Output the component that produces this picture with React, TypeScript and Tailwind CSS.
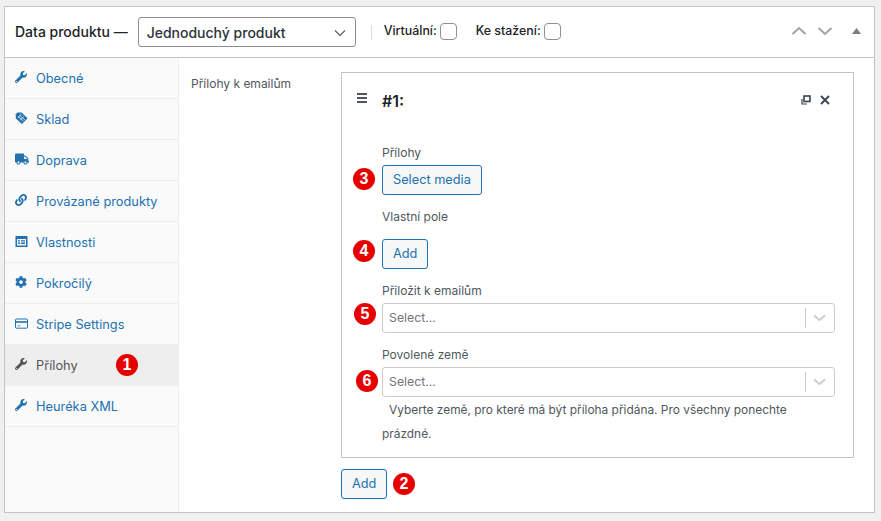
import React from "react";
import { FaWrench, FaTruck, FaLink, FaCog } from "react-icons/fa";

const Tag = () => (
  <svg width="13" height="13" viewBox="0 0 13 13" fill="currentColor">
    <path d="M6.5 0.5 12.6 6.2 7 12 0.8 6.6 0.8 2.2 2.4 0.5Z" />
    <g stroke="#fafafa" strokeWidth="0.7">
      <path d="M4.6 3 9.9 8" />
      <path d="M3.4 4.6 8.6 9.4" />
      <path d="M6.2 2.2 3 6" />
      <path d="M8.6 4.4 5.4 8.2" />
    </g>
  </svg>
);
const Table = () => (
  <svg width="13" height="13" viewBox="0 0 13 13" fill="currentColor">
    <path fillRule="evenodd" d="M0.5 1h12v11h-12zM2 4v6.5h9V4zM3 5.2h2v1.3H3zM6 5.2h4v1.3H6zM3 7.6h2v1.3H3zM6 7.6h4v1.3H6z" />
  </svg>
);
const Card = () => (
  <svg width="13" height="13" viewBox="0 0 13 13" fill="none" stroke="currentColor">
    <rect x="0.5" y="2" width="12" height="9.2" rx="1" />
    <path d="M0.5 5h12" strokeWidth="1.6" />
    <path d="M2.5 8.8h3" strokeWidth="0.7" />
  </svg>
);

const tabs: { label: string; icon: React.ReactNode; active?: boolean; badge?: string }[] = [
  { label: "Obecné", icon: <FaWrench size={12} /> },
  { label: "Sklad", icon: <Tag /> },
  { label: "Doprava", icon: <FaTruck size={14} /> },
  { label: "Provázané produkty", icon: <FaLink size={12} /> },
  { label: "Vlastnosti", icon: <Table /> },
  { label: "Pokročilý", icon: <FaCog size={12} /> },
  { label: "Stripe Settings", icon: <Card /> },
  { label: "Přílohy", icon: <FaWrench size={12} />, active: true, badge: "1" },
  { label: "Heuréka XML", icon: <FaWrench size={12} /> },
];

const Badge = ({ n, className }: { n: string; className: string }) => (
  <span
    className={`absolute flex h-[22px] w-[22px] items-center justify-center rounded-full bg-[#e60000] text-[16px] leading-none font-bold text-white ${className}`}
    style={{ fontFamily: "'Liberation Sans', sans-serif" }}
  >
    {n}
  </span>
);

const Btn = ({ children }: { children: React.ReactNode }) => (
  <button className="h-[30px] rounded-[3px] border border-[#2271b1] bg-[#f6f7f7] px-[10px] text-[12.75px] text-[#2271b1]">
    {children}
  </button>
);

const Select = () => (
  <div className="flex h-[30px] w-full items-center rounded-[3px] border border-[#cccccc] bg-white">
    <span className="flex-1 pl-[6px] text-[12.3px] text-[#757575]">Select...</span>
    <span className="h-[20px] w-px bg-[#cccccc]" />
    <svg width="28" height="10" viewBox="0 0 28 10" fill="none" stroke="#cccccc" strokeWidth="2">
      <path d="M8 2.5 13.5 7 19 2.5" />
    </svg>
  </div>
);

export default function App() {
  return (
    <div
      className="h-[521px] w-[881px] overflow-hidden bg-[#f0f0f1] pt-[6px] pl-[4px] text-[#50575e]"
      style={{ fontFamily: "Inter, 'Noto Sans', sans-serif" }}
    >
      <div className="flex h-[507px] w-[871px] flex-col border border-[#c3c4c7] bg-white text-[12px]">
        <div className="flex h-[51px] shrink-0 items-center border-b border-[#c3c4c7] pr-[13px] pl-[10px] text-[#1d2327]">
          <span className="-translate-y-px text-[14px] font-medium">Data produktu —</span>
          <div className="relative ml-[10px] flex h-[30px] w-[218px] items-center rounded-[3px] border border-[#8c8f94] pl-[8px] text-[14px] font-medium text-[#2c3338]">
            Jednoduchý produkt
            <svg className="absolute top-[11px] right-[9px]" width="12" height="8" viewBox="0 0 12 8" fill="none" stroke="#50575e" strokeWidth="1.1">
              <path d="M1 1.5 6 6.5 11 1.5" />
            </svg>
          </div>
          <span className="mr-[12px] ml-[15px] h-[15px] w-px bg-[#dcdcde]" />
          <span className="-translate-y-px text-[12.4px] font-medium">Virtuální:</span>
          <span className="ml-[3px] h-[17px] w-[17px] -translate-y-px rounded-[4px] border border-[#8c8f94]" />
          <span className="ml-[19px] -translate-y-px text-[12.4px] font-medium">Ke stažení:</span>
          <span className="ml-[3px] h-[17px] w-[17px] -translate-y-px rounded-[4px] border border-[#8c8f94]" />
          <svg className="ml-auto -translate-y-px" width="16" height="10" viewBox="0 0 16 10" fill="none" stroke="#a0a3a6" strokeWidth="2">
            <path d="M1.5 8 8 2 14.5 8" />
          </svg>
          <svg className="ml-[10px] -translate-y-px" width="16" height="10" viewBox="0 0 16 10" fill="none" stroke="#a0a3a6" strokeWidth="2">
            <path d="M1.5 2 8 8 14.5 2" />
          </svg>
          <svg className="ml-[19px] -translate-y-px" width="9" height="6" viewBox="0 0 9 6" fill="#787c82">
            <path d="M4.5 0 9 6H0Z" />
          </svg>
        </div>
        <div className="flex min-h-0 flex-1">
          <div className="w-[174px] shrink-0 border-r border-[#eeeeee] bg-[#fafafa]">
            {tabs.map((t) => (
              <div
                key={t.label}
                className={`relative flex h-[41px] items-center border-b border-[#eeeeee] pl-[10px] text-[12.8px] ${t.active ? "bg-[#eeeeee] text-[#555555]" : "text-[#2271b1]"}`}
              >
                <span className="flex w-[21px] shrink-0 -translate-y-px justify-start">{t.icon}</span>
                <span className="pt-[2px]">{t.label}</span>
                {t.badge && <Badge n={t.badge} className="top-[9px] left-[111px]" />}
              </div>
            ))}
          </div>
          <div className="flex flex-1 items-start pt-[14px] pl-[12px]">
            <div className="w-[150px] shrink-0 pt-[3px]">Přílohy k emailům</div>
            <div className="flex flex-col items-start">
              <div className="relative h-[386px] w-[513px] border border-[#c3c4c7] pl-[40px]">
                <div className="absolute top-[20px] left-[15px] flex flex-col gap-[2px]">
                  <span className="h-[2px] w-[10px] bg-[#50575e]" />
                  <span className="h-[2px] w-[10px] bg-[#50575e]" />
                  <span className="h-[2px] w-[10px] bg-[#50575e]" />
                </div>
                <svg className="absolute top-[22px] right-[42px]" width="10" height="10" viewBox="0 0 10 10" fill="none" stroke="#3c434a" strokeWidth="1.2">
                  <rect x="3" y="1" width="6" height="5.5" strokeWidth="1.6" />
                  <path d="M1 4v5h5" />
                </svg>
                <svg className="absolute top-[22px] right-[23px]" width="10" height="10" viewBox="0 0 10 10" fill="none" stroke="#3c434a" strokeWidth="1.8">
                  <path d="M1 1 9 9M9 1 1 9" />
                </svg>
                <div className="pt-[18px] text-[16px] leading-[20px] font-semibold text-[#1d2327]">#1:</div>
                <div className="mt-[34px] leading-[16px]">Přílohy</div>
                <div className="mt-[4px]"><Btn>Select media</Btn></div>
                <div className="mt-[14px] leading-[16px]">Vlastní pole</div>
                <div className="mt-[14px]"><Btn>Add</Btn></div>
                <div className="mt-[14px] leading-[16px]">Přiložit k emailům</div>
                <div className="mt-[4px] w-[453px]"><Select /></div>
                <div className="mt-[14px] leading-[16px]">Povolené země</div>
                <div className="mt-[4px] w-[453px]"><Select /></div>
                <div className="mt-[1px] w-[453px] text-[11.9px] leading-[24px]">
                  <span className="pl-[7px]">Vyberte země, pro které má být příloha přidána. Pro všechny ponechte prázdné.</span>
                </div>
                <Badge n="3" className="top-[95px] left-[11px]" />
                <Badge n="4" className="top-[167px] left-[11px]" />
                <Badge n="5" className="top-[230px] left-[12px]" />
                <Badge n="6" className="top-[297px] left-[14px]" />
              </div>
              <div className="relative mt-[11px]">
                <Btn>Add</Btn>
                <Badge n="2" className="top-[4px] left-[52px]" />
              </div>
            </div>
          </div>
        </div>
      </div>
    </div>
  );
}
